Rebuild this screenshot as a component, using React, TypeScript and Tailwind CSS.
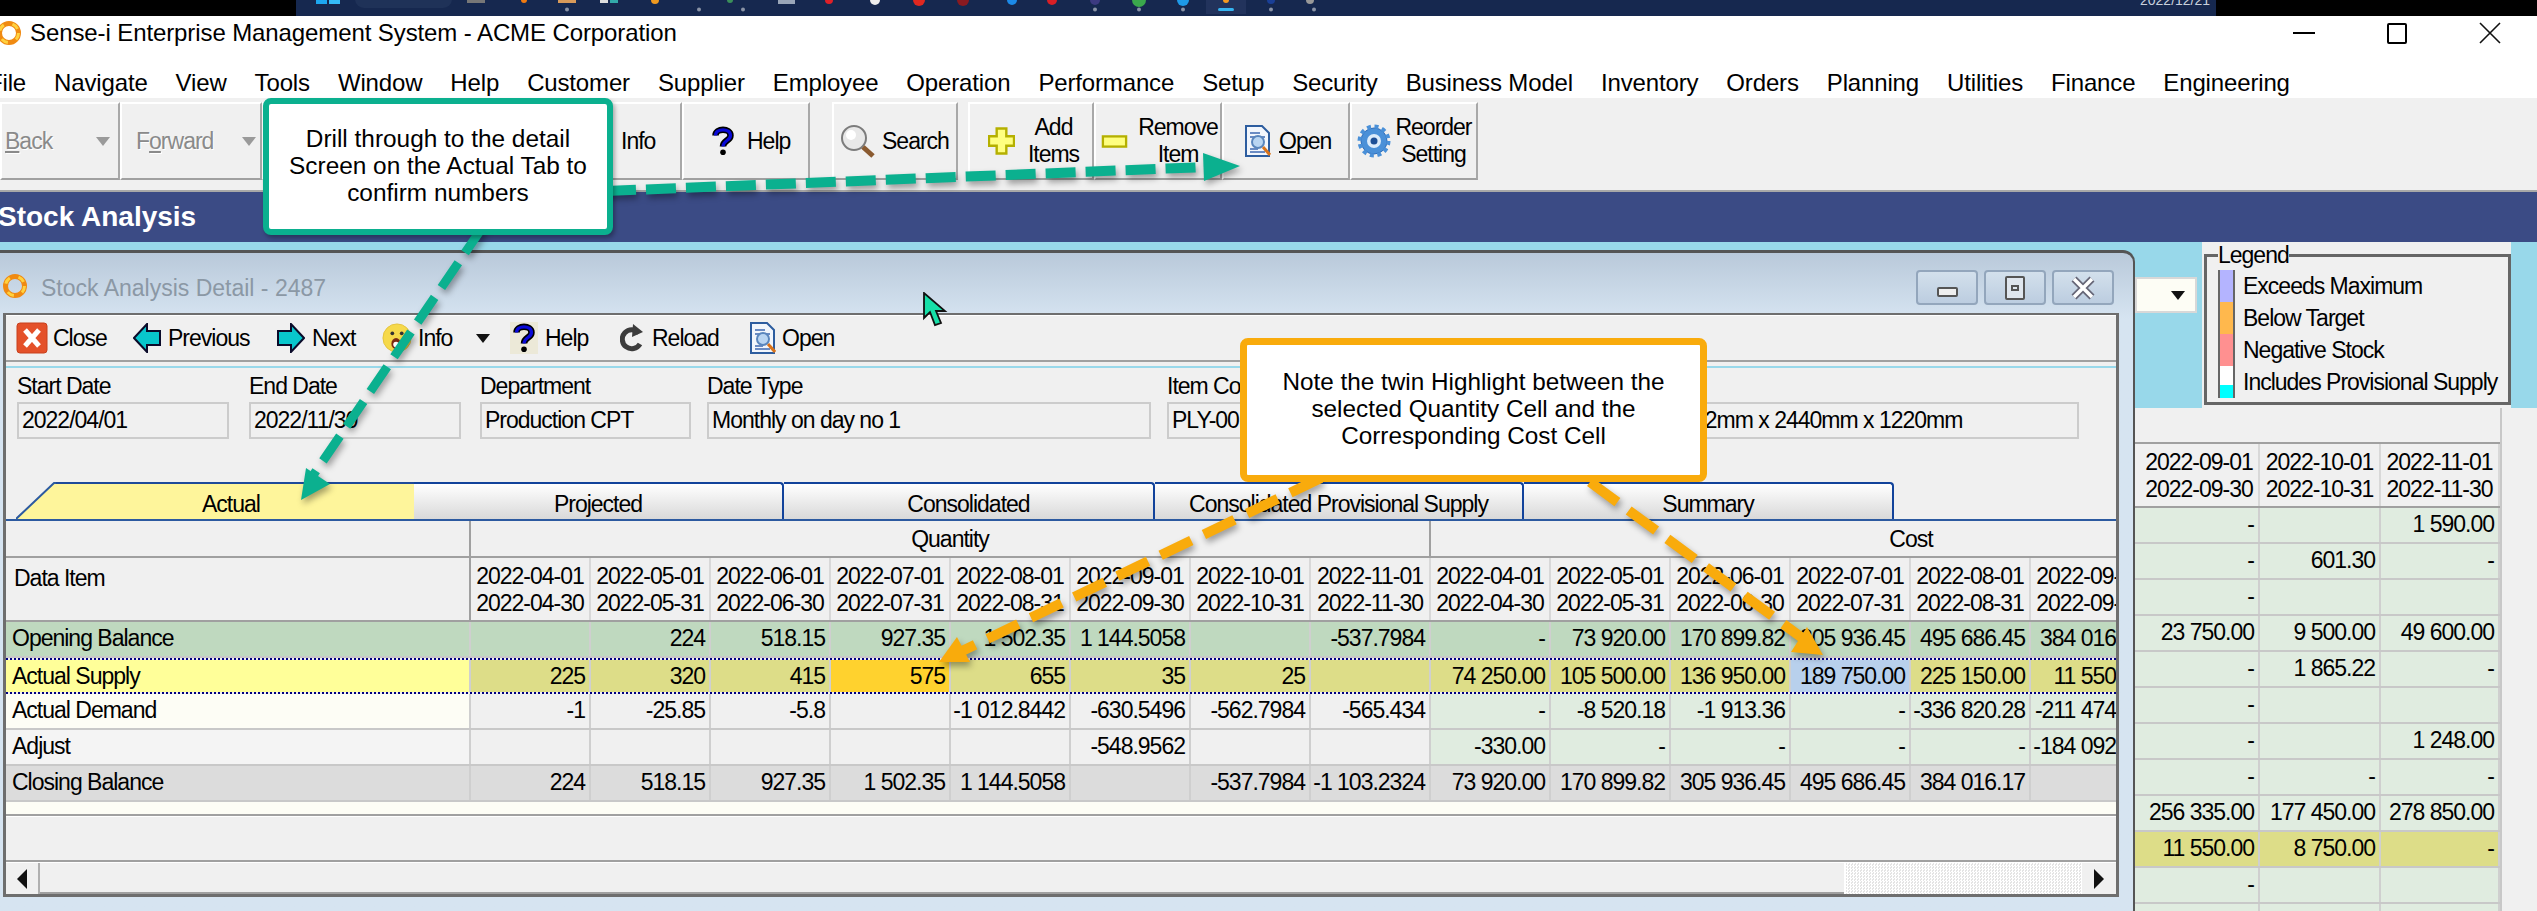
import React from "react";

const NARROW = "font-['Liberation_Sans',sans-serif] text-[23px] tracking-[-1px]";

const Logo = ({ size = 26 }: { size?: number }) => (
  <svg width={size} height={size} viewBox="0 0 26 26">
    <circle cx="13" cy="13" r="9.5" fill="none" stroke="#f08a12" strokeWidth="5" />
    <circle cx="13" cy="13" r="9.5" fill="none" stroke="#ffd23f" strokeWidth="3" strokeDasharray="7 9" />
  </svg>
);
const HelpIcon = ({ bg }: { bg?: boolean }) => (
  <svg width="28" height="32" viewBox="0 0 30 32" className={bg ? "bg-[#ece9d8]" : ""}>
    <path d="M7 10 C7 2 23 2 23 10 C23 16 15 15 15 22" fill="none" stroke="#000" strokeWidth="7" />
    <path d="M7 10 C7 2 23 2 23 10 C23 16 15 15 15 22" fill="none" stroke="#0a0ad8" strokeWidth="3.5" />
    <circle cx="15" cy="28" r="3" fill="#000" />
  </svg>
);
const CloseIcon = () => (
  <svg width="32" height="32" viewBox="0 0 32 32">
    <rect x="1" y="1" width="30" height="30" rx="3" fill="#e4512a" stroke="#c8401c" />
    <path d="M9 8 L23 24 M23 8 L9 24" stroke="#fff" strokeWidth="5" />
  </svg>
);
const ArrowIcon = ({ flip }: { flip?: boolean }) => (
  <svg width="28" height="30" viewBox="0 0 28 30" className={flip ? "-scale-x-100" : ""}>
    <path d="M1 15 L14 1 L14 8 L27 8 L27 22 L14 22 L14 29 Z" fill="#08c6cc" stroke="#0b0b2a" strokeWidth="2" />
  </svg>
);
const Smiley = () => (
  <svg width="30" height="32" viewBox="0 0 32 32">
    <circle cx="16" cy="16" r="15" fill="#f6d94a" stroke="#e3c23c" />
    <circle cx="11" cy="11" r="2" fill="#333" />
    <circle cx="21" cy="11" r="2" fill="#333" />
    <ellipse cx="15" cy="22" rx="5" ry="6" fill="#7a2a12" />
    <ellipse cx="15" cy="23" rx="3" ry="3" fill="#fff" />
  </svg>
);
const Reload = () => (
  <svg width="24" height="32" viewBox="0 0 24 32">
    <path d="M19 11 A9.5 9.5 0 1 0 20 22" fill="none" stroke="#3c3c3c" strokeWidth="5" />
    <path d="M13 2 L23 10 L12 15 Z" fill="#3c3c3c" />
  </svg>
);
const OpenIcon = () => (
  <svg width="26" height="32" viewBox="0 0 26 32">
    <path d="M1 1 H17 L24 8 V31 H1 Z" fill="#f2f6fc" stroke="#2d5d9f" strokeWidth="2" />
    <path d="M5 8 H15 M5 12 H20 M5 24 H13 M5 27 H20" stroke="#3e68b0" strokeWidth="1.6" />
    <circle cx="13" cy="17" r="6" fill="#b9d5f2" stroke="#5a86bd" strokeWidth="2" />
    <path d="M18 22 L25 30" stroke="#d9731a" strokeWidth="3" />
  </svg>
);
const SearchIcon = () => (
  <svg width="36" height="34" viewBox="0 0 36 34">
    <circle cx="14" cy="14" r="12" fill="#e8e8e8" stroke="#7c7c7c" strokeWidth="2" />
    <circle cx="11" cy="11" r="5" fill="#fff" />
    <path d="M23 23 L33 32" stroke="#8a5a30" strokeWidth="5" />
  </svg>
);
const PlusIcon = () => (
  <svg width="27" height="28" viewBox="0 0 28 28">
    <path d="M9 1 H19 V9 H27 V19 H19 V27 H9 V19 H1 V9 H9 Z" fill="#ffff80" stroke="#b5b000" strokeWidth="2.5" />
  </svg>
);
const MinusIcon = () => (
  <svg width="27" height="13" viewBox="0 0 28 14">
    <rect x="1.5" y="1.5" width="25" height="11" fill="#ffff80" stroke="#b5b000" strokeWidth="2.5" />
  </svg>
);
const Gear = () => (
  <svg width="34" height="34" viewBox="0 0 34 34">
    <circle cx="17" cy="17" r="13" fill="#4a90d8" stroke="#2f6cb8" strokeWidth="1" />
    <circle cx="17" cy="17" r="14.5" fill="none" stroke="#4a90d8" strokeWidth="4" strokeDasharray="4 3.6" />
    <circle cx="17" cy="17" r="7" fill="#dcebfa" />
    <circle cx="17" cy="17" r="3.5" fill="#1d4f96" />
  </svg>
);
const Caret = ({ dark }: { dark?: boolean }) => (
  <svg width="14" height="9" viewBox="0 0 14 9">
    <path d="M0 0 H14 L7 9 Z" fill={dark ? "#111" : "#9a9a9a"} />
  </svg>
);

function Taskbar() {
  const dots = [567, 699, 743, 1095, 1139, 1183, 1271, 1314];
  const icons: [number, number, number, string][] = [
    [467, 18, 3, "#777"], [558, 18, 3, "#d89a5a"], [600, 8, 3, "#ddd"], [610, 8, 3, "#3aa"], [778, 17, 4, "#9aa6b8"],
    [1206, 40, 14, "#22335c"],
  ];
  const blobs: [number, number, string][] = [
    [524, 2, "#f07a10"], [655, 3, "#f09a20"], [730, 2, "#3a8f5a"], [829, 3, "#e02028"], [875, 4, "#eee"], [919, 5, "#e02820"],
    [963, 5, "#8a1a20"], [1012, 4, "#1c8ae8"], [1052, 4, "#d81f26"], [1095, 4, "#3c3a80"], [1139, 6, "#3aa84c"], [1183, 5, "#1e9ae8"], [1226, 2, "#f59a20"], [1271, 3, "#1a3f96"], [1310, 3, "#999"],
  ];
  return (
    <svg width="1920" height="16" viewBox="296 0 1920 16" className="block shrink-0">
      <rect x="316" y="0" width="11" height="4" fill="#1da7f0" />
      <rect x="329" y="0" width="11" height="4" fill="#35bcf8" />
      <rect x="355" y="-10" width="97" height="18" rx="9" fill="#1f3258" />
      {icons.map(([x, w, h, c], i) => <rect key={i} x={x} y={0} width={w} height={h} fill={c} />)}
      {blobs.map(([x, r, c], i) => <circle key={i} cx={x} cy={0} r={r + 1} fill={c} />)}
      <rect x="1218" y="8" width="16" height="3" rx="1.5" fill="#35b4f0" />
      {dots.map((x) => <circle key={x} cx={x} cy="9.5" r="2" fill="#8a93a6" />)}
      <text x="2140" y="5" fontSize="14" fill="#c8d0dc">2022/12/21</text>
    </svg>
  );
}

const menu = ["File", "Navigate", "View", "Tools", "Window", "Help", "Customer", "Supplier", "Employee", "Operation", "Performance", "Setup", "Security", "Business Model", "Inventory", "Orders", "Planning", "Utilities", "Finance", "Engineering"];

const Btn = ({ w, children }: { w: string; children?: React.ReactNode }) => (
  <div className={`${w} h-[78px] flex items-center shrink-0 border-t-2 border-l-2 border-white border-r-2 border-r-[#a8a8a8] border-b-2 border-b-[#a0a0a0] leading-[27px]`}>
    {children}
  </div>
);

const fields = [
  { label: "Start Date", value: "2022/04/01", w: "w-[212px]", ml: "ml-[11px]", pl: "pl-[3px]" },
  { label: "End Date", value: "2022/11/30", w: "w-[212px]", ml: "ml-[20px]", pl: "pl-[3px]" },
  { label: "Department", value: "Production CPT", w: "w-[211px]", ml: "ml-[19px]", pl: "pl-[3px]" },
  { label: "Date Type", value: "Monthly on day no 1", w: "w-[444px]", ml: "ml-[16px]", pl: "pl-[3px]" },
  { label: "Item Code", value: "PLY-001", w: "w-[270px]", ml: "ml-[16px]", pl: "pl-[3px]" },
  { label: "", value: "12mm x 2440mm x 1220mm", w: "w-[626px]", ml: "ml-[16px]", pl: "pl-[238px]" },
];

const headers = [
  ["2022-04-01", "2022-04-30"], ["2022-05-01", "2022-05-31"], ["2022-06-01", "2022-06-30"], ["2022-07-01", "2022-07-31"],
  ["2022-08-01", "2022-08-31"], ["2022-09-01", "2022-09-30"], ["2022-10-01", "2022-10-31"], ["2022-11-01", "2022-11-30"],
  ["2022-04-01", "2022-04-30"], ["2022-05-01", "2022-05-31"], ["2022-06-01", "2022-06-30"], ["2022-07-01", "2022-07-31"],
  ["2022-08-01", "2022-08-31"], ["2022-09-01", "2022-09-30"],
];

type RowDef = { label: string; labelBg: string; bg: string; costBg: string; sel?: boolean; vals: string[] };
const rows: RowDef[] = [
  { label: "Opening Balance", labelBg: "bg-[#bfd9bf]", bg: "bg-[#bfd9bf]", costBg: "bg-[#bfd9bf]", vals: ["", "224", "518.15", "927.35", "1 502.35", "1 144.5058", "", "-537.7984", "-", "73 920.00", "170 899.82", "305 936.45", "495 686.45", "384 016.17"] },
  { label: "Actual Supply", labelBg: "bg-[#ffff99]", bg: "bg-[#dddd88]", costBg: "bg-[#dddd88]", sel: true, vals: ["225", "320", "415", "575", "655", "35", "25", "", "74 250.00", "105 500.00", "136 950.00", "189 750.00", "225 150.00", "11 550.00"] },
  { label: "Actual Demand", labelBg: "bg-[#fdfdf5]", bg: "bg-[#f0f0f0]", costBg: "bg-[#e0ece0]", vals: ["-1", "-25.85", "-5.8", "", "-1 012.8442", "-630.5496", "-562.7984", "-565.434", "-", "-8 520.18", "-1 913.36", "-", "-336 820.28", "-211 474.00"] },
  { label: "Adjust", labelBg: "bg-[#f4f4f4]", bg: "bg-[#f0f0f0]", costBg: "bg-[#e0ece0]", vals: ["", "", "", "", "", "-548.9562", "", "", "-330.00", "-", "-", "-", "-", "-184 092.00"] },
  { label: "Closing Balance", labelBg: "bg-[#dcdcdc]", bg: "bg-[#dcdcdc]", costBg: "bg-[#dcdcdc]", vals: ["224", "518.15", "927.35", "1 502.35", "1 144.5058", "", "-537.7984", "-1 103.2324", "73 920.00", "170 899.82", "305 936.45", "495 686.45", "384 016.17", ""] },
];

function MainRow({ r }: { r: RowDef }) {
  const h = r.sel ? "h-[36px] border-y-2 border-dotted border-[#000080]" : "h-[36px] border-b-2 border-[#c8c8c8]";
  return (
    <div className={`flex ${h}`}>
      <div className={`w-[465px] shrink-0 pl-[6px] border-r-2 border-[#cfcfcf] ${r.labelBg} leading-[33px]`}>{r.label}</div>
      {r.vals.map((v, i) => {
        let bg = i < 8 ? r.bg : r.costBg;
        if (r.sel && i === 3) bg = "bg-[#ffd22e]";
        if (r.sel && i === 11) bg = "bg-[#b8d0ec]";
        return (
          <div key={i} className={`w-[120px] shrink-0 overflow-hidden whitespace-nowrap text-right pr-[4px] border-r-2 border-[#cfcfcf] ${bg} leading-[33px]`}>{v}</div>
        );
      })}
    </div>
  );
}

const toolbarItems: { w: string; icon: React.ReactNode; t: string; gap: string }[] = [
  { w: "w-[117px]", icon: <CloseIcon />, t: "Close", gap: "gap-[5px]" },
  { w: "w-[144px]", icon: <ArrowIcon />, t: "Previous", gap: "gap-[7px]" },
  { w: "w-[105px]", icon: <ArrowIcon flip />, t: "Next", gap: "gap-[7px]" },
  { w: "w-[94px]", icon: <Smiley />, t: "Info", gap: "gap-[6px]" },
  { w: "w-[34px]", icon: <Caret dark />, t: "", gap: "" },
  { w: "w-[110px]", icon: <HelpIcon bg />, t: "Help", gap: "gap-[7px]" },
  { w: "w-[130px]", icon: <Reload />, t: "Reload", gap: "gap-[8px]" },
  { w: "w-[90px]", icon: <OpenIcon />, t: "Open", gap: "gap-[6px]" },
];

function StockWindow() {
  return (
    <div className="w-[2135px] h-[661px] mt-[8px] shrink-0 flex flex-col border-t-[3px] border-r-2 border-[#555] rounded-tr-[12px] bg-gradient-to-b from-[#b9c9da] to-[#d6e4f1] to-[10%] overflow-hidden">
      <div className="h-[60px] shrink-0 flex items-start">
        <div className="ml-[2px] mt-[20px]"><Logo /></div>
        <div className="ml-[13px] mt-[20px] text-[23px] text-[#8b98a5] leading-[30px]">Stock Analysis Detail - 2487</div>
        <div className="ml-auto mr-[19px] mt-[17px] flex gap-[6px]">
          {[0, 1, 2].map((i) => (
            <div key={i} className="w-[62px] h-[35px] rounded-[4px] border-2 border-[#93a6bc] bg-gradient-to-b from-[#d3e0ec] to-[#bccde0] flex items-center justify-center">
              {i === 0 && <div className="w-[21px] h-[10px] mt-[8px] border-2 border-[#555] bg-[#eee] rounded-[2px]" />}
              {i === 1 && <div className="w-[20px] h-[24px] border-2 border-[#555] bg-[#dfe6ee] rounded-[2px] flex items-center justify-center"><div className="w-[8px] h-[6px] border-2 border-[#555]" /></div>}
              {i === 2 && (
                <svg width="24" height="24" viewBox="0 0 24 24"><path d="M3 3 L21 21 M21 3 L3 21" stroke="#667" strokeWidth="7" /><path d="M3 3 L21 21 M21 3 L3 21" stroke="#fff" strokeWidth="3.5" /></svg>
              )}
            </div>
          ))}
        </div>
      </div>

      <div className={`ml-[3px] w-[2116px] h-[584px] shrink-0 flex flex-col border-t-2 border-x-[3px] border-b-[3px] border-[#6e6e6e] bg-[#f0f0f0] ${NARROW} text-black overflow-hidden`}>
        <div className="h-px bg-white shrink-0" />
        <div className="h-[44px] shrink-0 flex items-center pl-[10px] leading-[30px]">
          {toolbarItems.map((it, i) => (
            <div key={i} className={`${it.w} ${it.gap} shrink-0 flex items-center`}>
              {it.icon}{it.t && <span>{it.t}</span>}
            </div>
          ))}
        </div>
        <div className="h-[2px] shrink-0 bg-[#a0a0a0]" />
        <div className="h-[4px] shrink-0" />
        <div className="h-[2px] shrink-0 bg-[#98d8ea]" />
        <div className="h-[114px] shrink-0 flex">
          {fields.map((f, i) => (
            <div key={i} className={`${f.w} ${f.ml} shrink-0`}>
              <div className="h-[34px] leading-[36px] whitespace-nowrap">{f.label}</div>
              <div className={`h-[37px] border-2 border-[#cccccc] leading-[33px] whitespace-nowrap ${f.pl}`}>{f.value}</div>
            </div>
          ))}
        </div>
        <div className="h-[39px] shrink-0 flex border-b-2 border-[#2c5aa0] pl-[10px]">
          <svg width="40" height="37" viewBox="0 0 40 37" className="shrink-0">
            <polygon points="0,37 38,1 40,1 40,37" fill="#fef59b" />
            <path d="M0 37 L38 1 H40" fill="none" stroke="#2c5aa0" strokeWidth="2" />
          </svg>
          <div className="w-[358px] shrink-0 bg-[#fef59b] border-t-2 border-[#1e4a9a] text-center leading-[41px] pr-[8px]">Actual</div>
          {[["Projected", "w-[370px]"], ["Consolidated", "w-[371px]"], ["Consolidated Provisional Supply", "w-[369px]"], ["Summary", "w-[370px]"]].map(([t, w]) => (
            <div key={t} className={`${w} shrink-0 text-center leading-[41px] border-t-2 border-r-2 border-[#12439b] rounded-tr-[4px] bg-gradient-to-b from-white to-[#d9d9d9]`}>{t}</div>
          ))}
        </div>
        <div className="h-[35px] shrink-0 flex border-b-2 border-[#a0a0a0] box-content">
          <div className="w-[465px] shrink-0 border-r-2 border-[#a0a0a0]" />
          <div className="w-[960px] shrink-0 border-r-2 border-[#a0a0a0] text-center leading-[36px]">Quantity</div>
          <div className="w-[960px] shrink-0 text-center leading-[36px]">Cost</div>
        </div>
        <div className="h-[62px] shrink-0 flex border-b-2 border-[#a0a0a0] box-content">
          <div className="w-[465px] shrink-0 border-r-2 border-[#a0a0a0] pl-[8px] leading-[40px]">Data Item</div>
          {headers.map((h, i) => (
            <div key={i} className="w-[120px] shrink-0 overflow-hidden whitespace-nowrap text-center border-r-2 border-[#d8d8d8] pt-[5px] leading-[27px]">
              <div>{h[0]}</div><div>{h[1]}</div>
            </div>
          ))}
        </div>
        {rows.map((r) => <MainRow key={r.label} r={r} />)}
        <div className="h-[12px] shrink-0 bg-[#fdfdf5]" />
        <div className="h-[2px] shrink-0 bg-[#a0a0a0]" />
        <div className="h-[44px] shrink-0 border-t border-white" />
        <div className="h-[2px] shrink-0 bg-[#a0a0a0]" />
        <div className="flex-1 min-h-0 flex border-t border-white">
          <div className="w-[34px] shrink-0 border-r-2 border-[#b0b0b0] flex items-center justify-center">
            <svg width="10" height="20" viewBox="0 0 10 20"><path d="M10 0 V20 L0 10 Z" fill="#111" /></svg>
          </div>
          <div className="w-[1804px] shrink-0 border-b-[2px] border-[#a0a0a0]" />
          <div className="flex-1 bg-[repeating-conic-gradient(#ffffff_0_25%,#e4e4e4_0_50%)] bg-[length:3px_3px] border-l-2 border-white" />
          <div className="w-[34px] shrink-0 flex items-center justify-center">
            <svg width="10" height="20" viewBox="0 0 10 20"><path d="M0 0 V20 L10 10 Z" fill="#111" /></svg>
          </div>
        </div>
      </div>
    </div>
  );
}

const legend = [
  { t: "Exceeds Maximum", c: "bg-[#b4b4ff]" },
  { t: "Below Target", c: "bg-[#ffb84d]" },
  { t: "Negative Stock", c: "bg-[#ff9090]" },
  { t: "Includes Provisional Supply", c: "bg-gradient-to-b from-white from-60% to-[#00ffff] to-60%" },
];

const sideRows: string[][] = [
  ["-", "", "1 590.00"], ["-", "601.30", "-"], ["-", "", ""], ["23 750.00", "9 500.00", "49 600.00"], ["-", "1 865.22", "-"], ["-", "", ""],
  ["-", "", "1 248.00"], ["-", "-", "-"], ["256 335.00", "177 450.00", "278 850.00"], ["11 550.00", "8 750.00", "-"], ["-", "", ""], ["", "", ""],
];
const sideCols = ["w-[125px]", "w-[121px]", "w-[119px]"];

function SidePanel() {
  return (
    <div className={`flex-1 min-w-0 flex flex-col ${NARROW}`}>
      <div className="h-[166px] shrink-0 flex">
        <div className="w-[67px] shrink-0 pt-[35px]">
          <div className="w-[62px] h-[36px] bg-[#fdfdf5] border-2 border-[#d8d8d8] flex items-center justify-end pr-[10px]"><Caret dark /></div>
        </div>
        <div className="w-[309px] shrink-0 bg-[#f0f0f0] px-[2px]">
          <fieldset className="border-[3px] border-[#666] h-[163px] px-[11px]">
            <legend className="leading-[26px]">Legend</legend>
            <div className="flex flex-col pt-[2px]">
              {legend.map((l) => (
                <div key={l.t} className="h-[32px] flex items-center whitespace-nowrap">
                  <div className={`w-[17px] h-[32px] border-x-2 border-[#666] ${l.c}`} />
                  <span className="ml-[8px]">{l.t}</span>
                </div>
              ))}
            </div>
          </fieldset>
        </div>
      </div>
      <div className="flex-1 min-h-0 flex bg-[#f0f0f0] overflow-hidden">
        <div className="w-[365px] shrink-0 border-r-2 border-[#c8c8c8] box-content">
          <div className="h-[36px] border-b-2 border-[#a0a0a0]" />
          <div className="h-[62px] flex border-b-2 border-[#a0a0a0] box-content">
            {[["2022-09-01", "2022-09-30"], ["2022-10-01", "2022-10-31"], ["2022-11-01", "2022-11-30"]].map((h, i) => (
              <div key={i} className={`${sideCols[i]} shrink-0 text-center whitespace-nowrap leading-[27px] pt-[5px] border-r-2 border-[#d8d8d8] ${i === 0 ? "pl-[5px]" : ""}`}>
                <div>{h[0]}</div><div>{h[1]}</div>
              </div>
            ))}
          </div>
          {sideRows.map((r, i) => (
            <div key={i} className={`h-[36px] flex border-b-2 border-[#c8c8c8] ${i === 9 ? "bg-[#dddd88]" : "bg-[#e0ece0]"}`}>
              {r.map((v, j) => (
                <div key={j} className={`${sideCols[j]} shrink-0 text-right pr-[4px] border-r-2 border-[#cfcfcf] leading-[33px] whitespace-nowrap`}>{v}</div>
              ))}
            </div>
          ))}
        </div>
      </div>
    </div>
  );
}

function Connectors() {
  return (
    <svg width="2537" height="911" viewBox="0 0 2537 911" className="absolute inset-0 pointer-events-none drop-shadow-[2px_4px_3px_rgba(0,0,0,0.35)]">
      <line x1="606" y1="191" x2="1205" y2="167" stroke="#0bb08f" strokeWidth="10" strokeDasharray="30 10" />
      <polygon points="1240,166 1203,153 1204,181" fill="#0bb08f" />
      <line x1="482" y1="228" x2="314" y2="474" stroke="#0bb08f" strokeWidth="9" strokeDasharray="30 12" />
      <polygon points="301,500 306,468 330,484" fill="#0bb08f" />
      <line x1="1321" y1="478" x2="960" y2="652" stroke="#f9ab0c" strokeWidth="10" strokeDasharray="34 14" />
      <polygon points="939,662 957,637 970,662" fill="#f9ab0c" />
      <line x1="1590" y1="482" x2="1805" y2="640" stroke="#f9ab0c" strokeWidth="10" strokeDasharray="34 14" />
      <polygon points="1823,655 1791,652 1807,627" fill="#f9ab0c" />
    </svg>
  );
}

export default function App() {
  return (
    <div className="relative w-[2537px] h-[911px] overflow-hidden bg-white text-black font-['Liberation_Sans',sans-serif]">
      <div className="h-[16px] flex bg-black overflow-hidden">
        <div className="w-[296px] shrink-0" />
        <div className="w-[1920px] shrink-0 bg-[#16284f] flex">
          <Taskbar />
        </div>
      </div>
      <div className="h-[34px] flex items-center bg-white">
        <div className="w-[30px] shrink-0 -ml-[4px] mr-[4px]"><Logo /></div>
        <div className="text-[24px] leading-[30px] tracking-[-0.1px] whitespace-nowrap">Sense-i Enterprise Management System - ACME Corporation</div>
        <div className="ml-auto flex items-center mr-[36px] gap-[72px]">
          <div className="w-[22px] h-[2px] bg-black" />
          <div className="w-[20px] h-[21px] border-2 border-black rounded-[2px]" />
          <svg width="22" height="22" viewBox="0 0 22 22"><path d="M1 1 L21 21 M21 1 L1 21" stroke="#111" strokeWidth="1.6" /></svg>
        </div>
      </div>
      <div className="h-[48px] pt-[17px] flex items-center gap-[28px] -ml-[12px] text-[24px] leading-[30px] tracking-[-0.15px] whitespace-nowrap">
        {menu.map((m) => <span key={m}>{m}</span>)}
      </div>
      <div className={`h-[94px] bg-[#f0f0f0] border-b-2 border-[#a8a8a8] pt-[4px] flex ${NARROW}`}>
        <Btn w="w-[120px]">
          <span className="ml-[3px] text-[#8a8a8a] [text-shadow:1px_1px_0_#fff]"><span className="underline">B</span>ack</span>
          <span className="ml-auto mr-[8px]"><Caret /></span>
        </Btn>
        <Btn w="w-[142px]">
          <span className="ml-[14px] text-[#8a8a8a] [text-shadow:1px_1px_0_#fff]">F<span className="underline">o</span>rward</span>
          <span className="ml-auto mr-[4px]"><Caret /></span>
        </Btn>
        <Btn w="w-[298px]" />
        <Btn w="w-[122px]"><span className="ml-[59px]">Info</span></Btn>
        <Btn w="w-[128px]"><span className="ml-[25px]"><HelpIcon /></span><span className="ml-[10px]">Help</span></Btn>
        <div className="w-[22px] shrink-0" />
        <Btn w="w-[126px]"><span className="ml-[6px]"><SearchIcon /></span><span className="ml-[6px]">Search</span></Btn>
        <div className="w-[10px] shrink-0" />
        <Btn w="w-[126px]"><span className="ml-[18px]"><PlusIcon /></span><span className="flex-1 text-center">Add<br />Items</span></Btn>
        <Btn w="w-[128px]"><span className="ml-[5px]"><MinusIcon /></span><span className="flex-1 text-center whitespace-nowrap pl-[8px]">Remove<br />Item</span></Btn>
        <Btn w="w-[128px]"><span className="ml-[21px]"><OpenIcon /></span><span className="ml-[8px]"><span className="underline">O</span>pen</span></Btn>
        <Btn w="w-[128px]"><span className="ml-[5px]"><Gear /></span><span className="flex-1 text-center">Reorder<br />Setting</span></Btn>
      </div>
      <div className="h-[50px] bg-[#3b4b85] text-white text-[28px] font-bold leading-[50px] -ml-[2px]">Stock Analysis</div>
      <div className="h-[669px] flex bg-[#98d8ea]">
        <StockWindow />
        <SidePanel />
      </div>

      <Connectors />

      <div className="absolute left-[263px] top-[98px] w-[350px] h-[137px] rounded-[8px] border-[6px] border-[#0bb08f] bg-white shadow-[2px_3px_4px_rgba(0,0,0,0.3)] flex items-center justify-center text-center text-[24.4px] leading-[27px] pb-[3px]">
        <div>Drill through to the detail<br />Screen on the Actual Tab to<br />confirm numbers</div>
      </div>
      <div className="absolute left-[1240px] top-[338px] w-[467px] h-[144px] rounded-[8px] border-[7px] border-[#f9ab0c] bg-white flex items-center justify-center text-center text-[24.3px] leading-[27px] pb-[4px]">
        <div>Note the twin Highlight between the<br />selected Quantity Cell and the<br />Corresponding Cost Cell</div>
      </div>
      <svg width="26" height="36" viewBox="0 0 26 36" className="absolute left-[922px] top-[292px]">
        <path d="M2 1 V26 L8 20 L13 33 L19 31 L14 19 L23 19 Z" fill="#16e0a8" stroke="#111" strokeWidth="1.8" />
      </svg>
    </div>
  );
}
